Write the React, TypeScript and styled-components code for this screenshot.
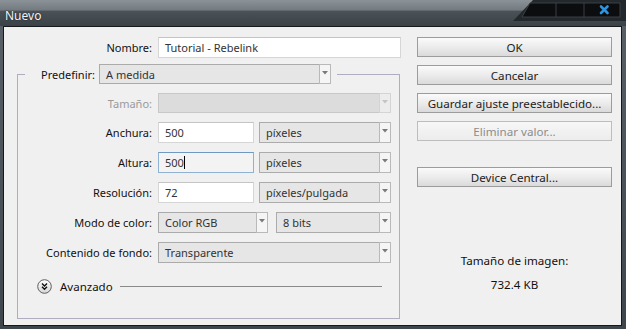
import React from 'react';
import styled, { createGlobalStyle } from 'styled-components';

const GlobalStyle = createGlobalStyle`
  html, body {
    margin: 0;
    padding: 0;
    background: #2c3136;
    font-family: "Noto Sans", "Open Sans", sans-serif;
    font-size: 11px;
    color: #111;
  }
  * { box-sizing: border-box; }
`;

const Window = styled.div`
  width: 626px;
  height: 329px;
  display: flex;
  flex-direction: column;
  background: linear-gradient(180deg, #5a6168 0%, #3e454b 100%);
`;

const TitleBar = styled.div`
  height: 26px;
  display: flex;
  align-items: flex-start;
  justify-content: space-between;
  background: linear-gradient(180deg, #8b9298 0%, #737a80 38%, #4a5157 44%, #3a4147 100%);
`;

const Title = styled.span`
  padding: 7px 0 0 5px;
  font-size: 12px;
  color: #eef3f6;
  text-shadow: 0 0 2px rgba(0, 0, 0, 0.6);
`;

const Client = styled.div`
  flex: 1;
  margin: 0 4px 3px 3px;
  border: 1px solid #16191b;
  background: #f0f0f0;
  display: flex;
  padding: 10px 9px 0 13px;
`;

const LeftColumn = styled.div`
  width: 384px;
  display: flex;
  flex-direction: column;
`;

const RightColumn = styled.div`
  width: 195px;
  margin-left: 16px;
  display: flex;
  flex-direction: column;
  gap: 8px;
`;

const NameRow = styled.div`
  display: grid;
  grid-template-columns: 135px 243px;
  column-gap: 6px;
  align-items: center;
  height: 21px;
`;

const Label = styled.span<{ $disabled?: boolean }>`
  text-align: right;
  white-space: nowrap;
  color: ${p => (p.$disabled ? '#9a9a9a' : '#111')};
`;

const TextInput = styled.div<{ $w?: number; $focus?: boolean }>`
  width: ${p => (p.$w ? `${p.$w}px` : '100%')};
  height: 21px;
  display: flex;
  align-items: center;
  padding-left: 6px;
  background: ${p => (p.$focus ? '#f3f3f3' : '#fff')};
  border: 1px solid ${p => (p.$focus ? '#8fb2d3' : '#d6d6d6')};
  border-top-color: ${p => (p.$focus ? '#6f98c2' : '#c4c4c4')};
  color: #333;
`;

const Caret = styled.span`
  display: inline-block;
  width: 1px;
  height: 13px;
  background: #000;
`;

const Group = styled.fieldset`
  margin: 6px 0 0 0;
  width: 383px;
  padding: 9px 7px 24px 7px;
  border: 1px solid #aeaec0;
  display: flex;
  flex-direction: column;
  gap: 8px;
`;

const Legend = styled.legend`
  padding: 0 6px 0 8px;
  display: flex;
  align-items: center;
  gap: 4px;
`;

const LegendLabel = styled.span`
  width: 62px;
  text-align: right;
`;

const Row = styled.div<{ $h?: number }>`
  display: grid;
  grid-template-columns: 127px 233px;
  column-gap: 6px;
  align-items: center;
  height: ${p => p.$h || 21}px;
  & + & { margin-top: ${p => (p.$h ? 0 : 1)}px; }
`;

const Fields = styled.div<{ $gap?: number }>`
  display: flex;
  gap: ${p => p.$gap || 5}px;
`;

const SelectBox = styled.div<{ $w?: number; $h?: number; $disabled?: boolean }>`
  width: ${p => (p.$w ? `${p.$w}px` : '100%')};
  height: ${p => p.$h || 21}px;
  display: flex;
  align-items: stretch;
  background: ${p => (p.$disabled ? '#dcdcdc' : '#e6e6e6')};
  border: 1px solid ${p => (p.$disabled ? '#c8c8c8' : '#ababab')};
  color: ${p => (p.$disabled ? '#999' : '#333')};
`;

const SelectText = styled.span`
  flex: 1;
  display: flex;
  align-items: center;
  padding-left: 6px;
  white-space: nowrap;
`;

const ArrowBox = styled.span<{ $disabled?: boolean }>`
  width: 12px;
  margin: -1px -1px -1px 0;
  display: flex;
  align-items: flex-start;
  justify-content: center;
  padding-top: 6px;
  background: ${p => (p.$disabled ? '#ececec' : '#f5f5f5')};
  border: 1px solid ${p => (p.$disabled ? '#d4d4d4' : '#b9b9b9')};
`;

const Advanced = styled.div`
  margin-top: 8px;
  height: 15px;
  display: flex;
  align-items: center;
  padding: 0 10px 0 12px;
`;

const AdvancedText = styled.span`
  margin-left: 8px;
  font-size: 11.5px;
`;

const Rule = styled.span`
  flex: 1;
  height: 1px;
  margin-left: 7px;
  background: #8a8a8a;
`;

const Button = styled.div<{ $disabled?: boolean; $top?: number }>`
  height: 20px;
  margin-top: ${p => p.$top || 0}px;
  display: flex;
  align-items: center;
  justify-content: center;
  border: 1px solid ${p => (p.$disabled ? '#bdbdbd' : '#9c9c9c')};
  background: ${p =>
    p.$disabled
      ? 'linear-gradient(180deg, #f7f7f7 0%, #ececec 100%)'
      : 'linear-gradient(180deg, #fafafa 0%, #ececec 50%, #dadada 100%)'};
  color: ${p => (p.$disabled ? '#8c8c8c' : '#222')};
  font-size: 11.6px;
`;

const Info = styled.div`
  margin-top: 56px;
  display: flex;
  flex-direction: column;
  align-items: center;
  gap: 5px;
  font-size: 11.6px;
  line-height: 19px;
`;

const Arrow: React.FC<{ disabled?: boolean }> = ({ disabled }) => (
  <svg width="6" height="4" viewBox="0 0 6 4">
    <path d="M0 0 L6 0 L3 3.5 Z" fill={disabled ? '#c4c4c4' : '#7a7a7a'} />
  </svg>
);

const Select: React.FC<{ value?: string; w?: number; h?: number; disabled?: boolean }> = ({
  value,
  w,
  h,
  disabled,
}) => (
  <SelectBox $w={w} $h={h} $disabled={disabled}>
    <SelectText>{value}</SelectText>
    <ArrowBox $disabled={disabled}>
      <Arrow disabled={disabled} />
    </ArrowBox>
  </SelectBox>
);

const CaptionButtons = () => (
  <svg width="113" height="22" viewBox="0 0 113 22">
    <path d="M20 0 L113 0 L113 21 L0 21 Z" fill="#23282c" />
    <path d="M17 3 L107 3 L107 17 L9 17 Z" fill="#0b0d0f" stroke="#3b4146" strokeWidth="1" />
    <line x1="43" y1="3" x2="43" y2="17" stroke="#3b4146" />
    <line x1="71" y1="3" x2="71" y2="17" stroke="#3b4146" />
    <path d="M88 6.5 L94.5 13 M94.5 6.5 L88 13" stroke="#2f93dd" strokeWidth="2.6" strokeLinecap="round" />
  </svg>
);

const AdvancedIcon = () => (
  <svg width="15" height="15" viewBox="0 0 15 15">
    <defs>
      <linearGradient id="adv" x1="0" y1="0" x2="0" y2="1">
        <stop offset="0" stopColor="#ffffff" />
        <stop offset="1" stopColor="#d6d6d6" />
      </linearGradient>
    </defs>
    <circle cx="7.5" cy="7.5" r="6.8" fill="url(#adv)" stroke="#5e5e5e" strokeWidth="1" />
    <path d="M5 4.5 L7.5 7 L10 4.5 M5 7.8 L7.5 10.3 L10 7.8" fill="none" stroke="#111" strokeWidth="1.4" />
  </svg>
);

const App: React.FC = () => (
  <>
    <GlobalStyle />
    <Window>
      <TitleBar>
        <Title>Nuevo</Title>
        <CaptionButtons />
      </TitleBar>
      <Client>
        <LeftColumn>
          <NameRow>
            <Label>Nombre:</Label>
            <TextInput>Tutorial - Rebelink</TextInput>
          </NameRow>

          <Group>
            <Legend>
              <LegendLabel>Predefinir:</LegendLabel>
              <Select value="A medida" w={232} h={20} />
            </Legend>

            <Row $h={20}>
              <Label $disabled>Tamaño:</Label>
              <Select w={233} h={20} disabled />
            </Row>
            <Row>
              <Label>Anchura:</Label>
              <Fields>
                <TextInput $w={96}>500</TextInput>
                <Select value="píxeles" w={132} />
              </Fields>
            </Row>
            <Row>
              <Label>Altura:</Label>
              <Fields>
                <TextInput $w={96} $focus>
                  500<Caret />
                </TextInput>
                <Select value="píxeles" w={132} />
              </Fields>
            </Row>
            <Row>
              <Label>Resolución:</Label>
              <Fields>
                <TextInput $w={96}>72</TextInput>
                <Select value="píxeles/pulgada" w={132} />
              </Fields>
            </Row>
            <Row>
              <Label>Modo de color:</Label>
              <Fields $gap={8}>
                <Select value="Color RGB" w={110} />
                <Select value="8 bits" w={115} />
              </Fields>
            </Row>
            <Row>
              <Label>Contenido de fondo:</Label>
              <Select value="Transparente" w={233} />
            </Row>

            <Advanced>
              <AdvancedIcon />
              <AdvancedText>Avanzado</AdvancedText>
              <Rule />
            </Advanced>
          </Group>
        </LeftColumn>

        <RightColumn>
          <Button>OK</Button>
          <Button>Cancelar</Button>
          <Button>Guardar ajuste preestablecido...</Button>
          <Button $disabled>Eliminar valor...</Button>
          <Button $top={18}>Device Central...</Button>
          <Info>
            <span>Tamaño de imagen:</span>
            <span>732.4 KB</span>
          </Info>
        </RightColumn>
      </Client>
    </Window>
  </>
);

export default App;
